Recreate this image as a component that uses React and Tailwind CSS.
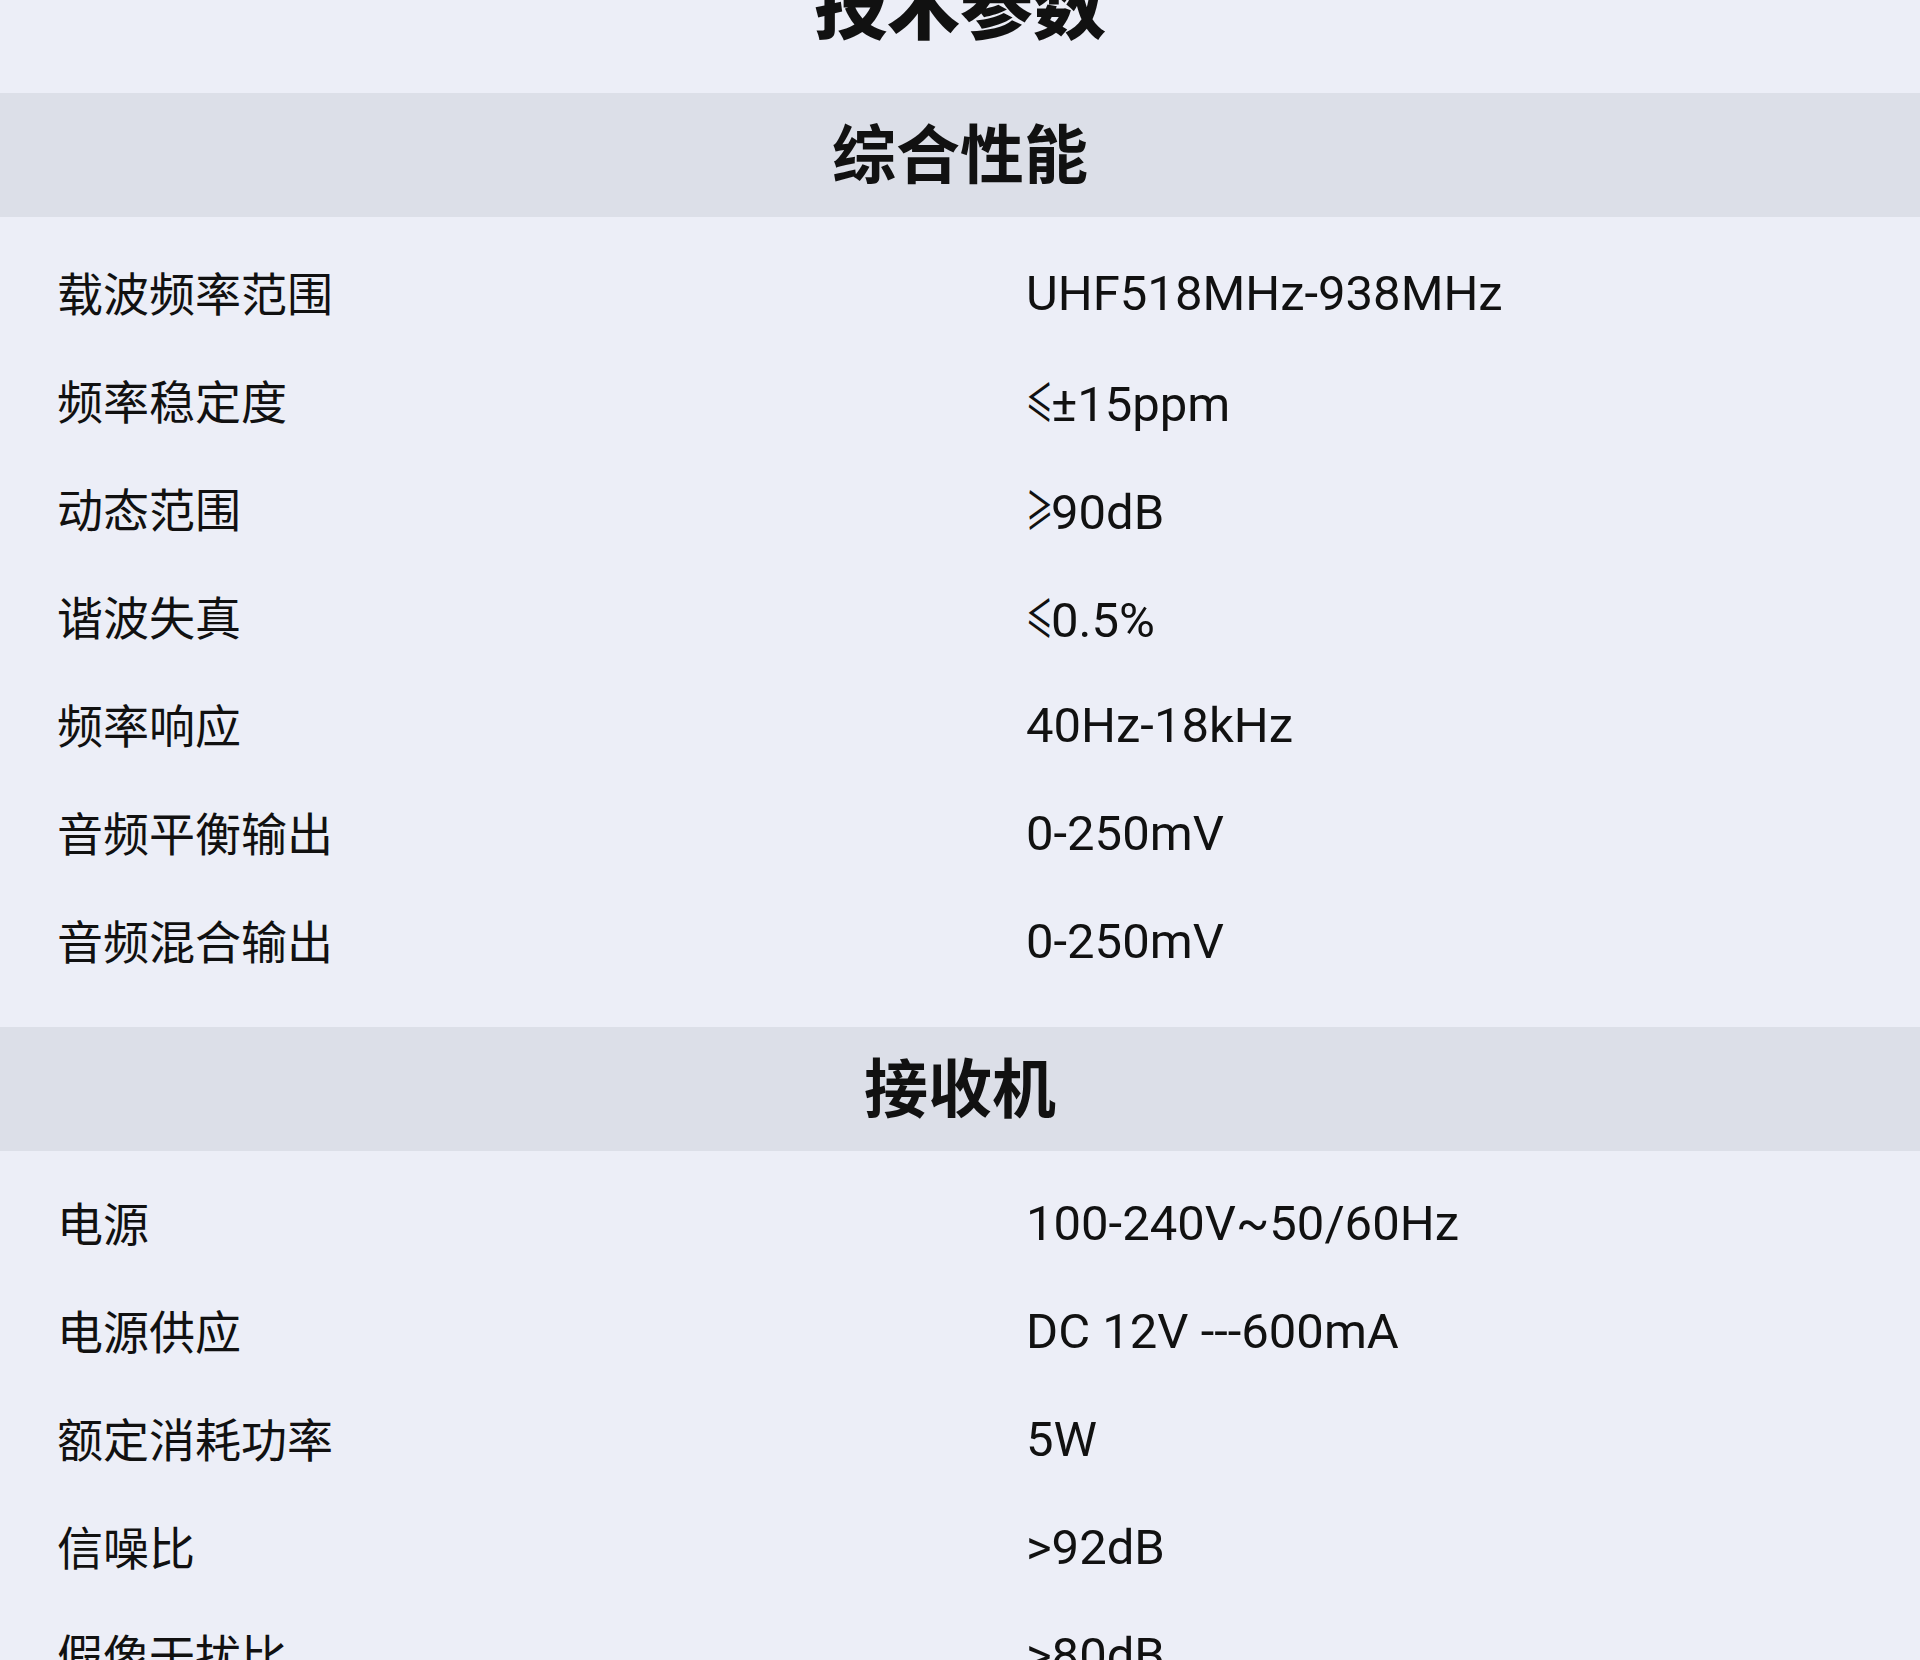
import React from 'react';

const general = [
  ['载波频率范围', 'UHF518MHz-938MHz'],
  ['频率稳定度', ['≤', '±15ppm']],
  ['动态范围', ['≥', '90dB']],
  ['谐波失真', ['≤', '0.5%']],
  ['频率响应', '40Hz-18kHz'],
  ['音频平衡输出', '0-250mV'],
  ['音频混合输出', '0-250mV'],
];

const receiver = [
  ['电源', '100-240V~50/60Hz'],
  ['电源供应', 'DC 12V ---600mA'],
  ['额定消耗功率', '5W'],
  ['信噪比', '>92dB'],
  ['假像干扰比', '>80dB'],
];

function SectionHeader({ title }) {
  return (
    <div className="flex h-[124px] items-center justify-center bg-[#dcdfe8]">
      <h2 className="pt-[4px] text-[64px] leading-none font-bold text-[#111111]">{title}</h2>
    </div>
  );
}

function SpecRow({ label, value }) {
  return (
    <div className="grid h-[108px] grid-cols-[1026px_1fr] items-center">
      <div className="pt-[8px] pl-[57px] text-[46px] leading-none text-[#111111]">{label}</div>
      <div className="pt-[5px] text-[49px] leading-none text-[#111111]">
        {Array.isArray(value) ? (
          <>
            {/* slanted CJK comparison sign, squeezed to the narrow width in the picture */}
            <span
              className="inline-block w-[25px] origin-left scale-x-[0.55]"
              style={{ fontFamily: '"Noto Sans CJK SC", sans-serif' }}
            >
              {value[0]}
            </span>
            {value[1]}
          </>
        ) : (
          value
        )}
      </div>
    </div>
  );
}

export default function App() {
  return (
    <div
      className="h-[1660px] overflow-hidden bg-[#eceef7]"
      style={{ fontFamily: 'Roboto, "Noto Sans CJK SC", sans-serif' }}
    >
      {/* Page title, top is cut off */}
      <div className="h-[93px] overflow-hidden">
        <h1 className="mt-[-28px] text-center text-[73px] leading-none font-black text-[#111111]">
          技术参数
        </h1>
      </div>

      {/* 综合性能 */}
      <SectionHeader title="综合性能" />
      <div className="pt-[20px] pb-[34px]">
        {general.map(([label, value]) => (
          <SpecRow key={label} label={label} value={value} />
        ))}
      </div>

      {/* 接收机 */}
      <SectionHeader title="接收机" />
      <div className="pt-[16px]">
        {receiver.map(([label, value]) => (
          <SpecRow key={label} label={label} value={value} />
        ))}
      </div>
    </div>
  );
}
